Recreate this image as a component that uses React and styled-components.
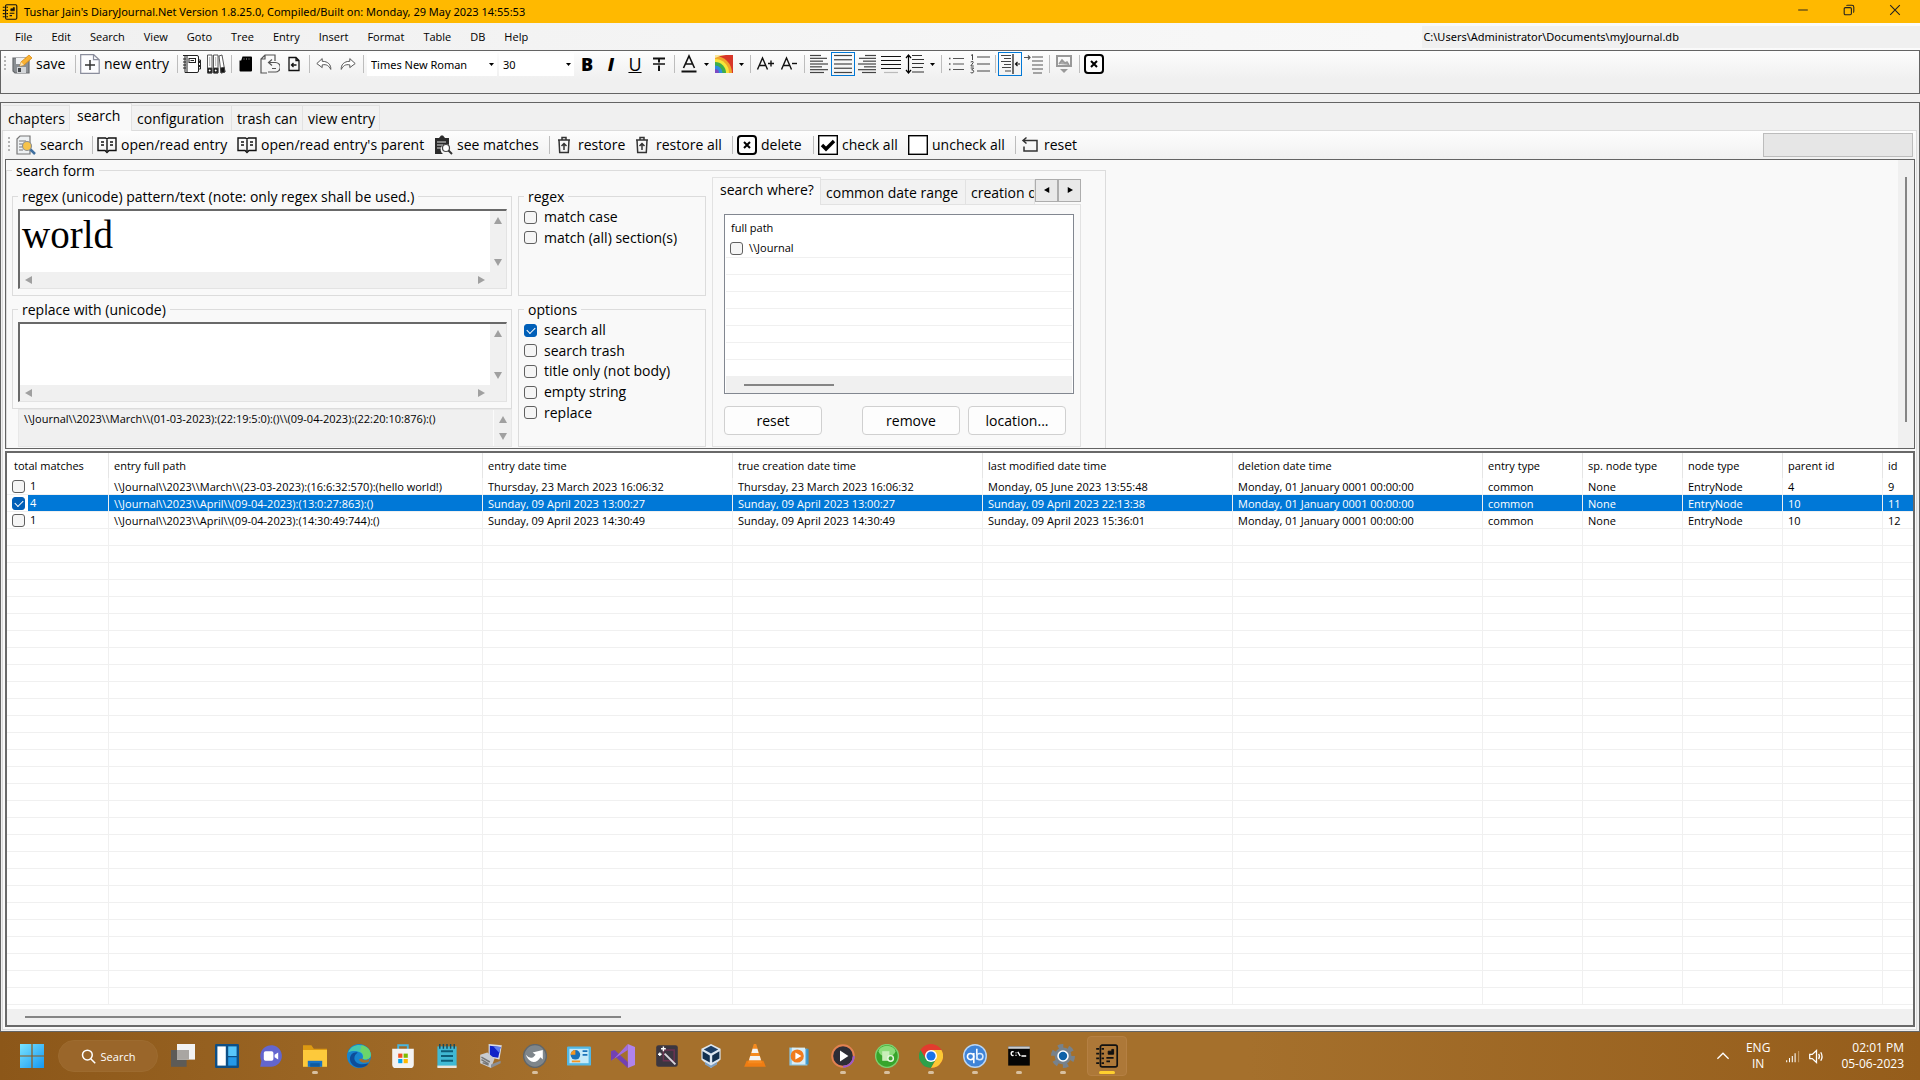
import React from "react";
import styled, { createGlobalStyle, css } from "styled-components";

const GlobalStyle = createGlobalStyle`
  * {
    box-sizing: border-box;
  }
  body {
    margin: 0;
    background: #f0f0f0;
    color: #000;
    font-family: "Open Sans", "Noto Sans", sans-serif;
    font-size: 14px;
  }
  button, input, textarea, select {
    font-family: inherit;
    color: inherit;
  }
`;

const Desktop = styled.div`
  display: flex;
  flex-direction: column;
  min-height: 100vh;
`;

/* ---------- title bar and menu ---------- */

const TitleBar = styled.header`
  display: flex;
  align-items: center;
  height: 23px;
  padding: 0 2px;
  background: #ffb900;
  font-family: "Noto Sans", sans-serif;
  font-size: 11px;
`;

const TitleText = styled.span`
  flex: 1;
  margin-left: 6px;
`;

const WindowButton = styled.button`
  display: flex;
  align-items: center;
  justify-content: center;
  width: 46px;
  height: 20px;
  margin-bottom: 3px;
  padding: 0;
  border: 0;
  background: none;
`;

const MenuBar = styled.nav`
  display: flex;
  align-items: center;
  height: 27px;
  padding-left: 6px;
  background: linear-gradient(90deg, #f0f0f0, #fbfbfb);
`;

const MenuItem = styled.button`
  padding: 0 10px 0 9px;
  border: 0;
  background: none;
  font-size: 11px;
  line-height: 20px;
`;

const DbPath = styled.div`
  width: 26%;
  margin-left: auto;
  padding-left: 1px;
  background: #f0f0f0;
  font-family: "Noto Sans", sans-serif;
  font-size: 11px;
  line-height: 22px;
`;

/* ---------- tool bars ---------- */

const FormatPanel = styled.div`
  height: 44px;
  border: 1px solid #646464;
  background: linear-gradient(#fdfdfd, #f0f0f0 28px);
`;

const ToolRow = styled.div`
  display: flex;
  align-items: center;
  height: 26px;
`;

const SearchTools = styled(ToolRow)`
  height: 28px;
  background: linear-gradient(#fdfdfd, #f1f1f1);
`;

const Grip = styled.span`
  width: 2px;
  height: 16px;
  margin: 0 4px 0 3px;
  background: repeating-linear-gradient(#b4b4b4 0 2px, transparent 2px 4px);
`;

const Separator = styled.span`
  width: 1px;
  height: 18px;
  margin: 0 2px 0 3px;
  background: #bdbdbd;
`;

const ToolButton = styled.button`
  display: flex;
  align-items: center;
  justify-content: ${(p) => (p.$w ? "flex-start" : "center")};
  gap: 4px;
  flex: none;
  width: ${(p) => p.$w || 24}px;
  height: 24px;
  padding: 0 0 0 ${(p) => (p.$w ? 2 : 0)}px;
  border: ${(p) => (p.$on ? "1px solid #0078d7" : "0")};
  background: none;
  font-size: 14px;
  line-height: 20px;
  white-space: nowrap;
`;

const DropArrow = styled.button`
  display: flex;
  align-items: center;
  justify-content: center;
  width: 11px;
  height: 24px;
  padding: 0;
  border: 0;
  background: none;
`;

const ComboWrap = styled.span`
  display: grid;
  align-items: center;

  > * {
    grid-area: 1 / 1;
  }
  svg {
    justify-self: end;
    margin-right: 4px;
    pointer-events: none;
  }
`;

const Combo = styled.select`
  width: ${(p) => p.$w}px;
  height: 23px;
  margin: 0 1px;
  padding: 0 4px;
  border: 0;
  appearance: none;
  background: #fff;
  font-family: "Noto Sans", sans-serif;
  font-size: 11px;
`;

const Progress = styled.progress`
  width: 150px;
  height: 24px;
  margin: 0 2px 0 auto;
  border: 1px solid #bcbcbc;
  appearance: none;

  &::-webkit-progress-bar {
    background: #e6e6e6;
  }
`;

/* ---------- tabs ---------- */

const Main = styled.main`
  display: flex;
  flex: 1;
  flex-direction: column;
  margin-top: 8px;
  border: 1px solid #646464;
  background: #f0f0f0;
`;

const TabStrip = styled.div`
  display: flex;
  align-items: flex-end;
  height: 27px;
  padding-left: 2px;
`;

const Tab = styled.button`
  flex: none;
  width: ${(p) => p.$w}px;
  height: 25px;
  padding: 1px 0 0 5px;
  overflow: hidden;
  border: 1px solid #e2e2e2;
  border-left-width: 0;
  border-bottom: 0;
  background: #f2f2f2;
  font-size: 14px;
  line-height: 22px;
  text-align: left;
  white-space: nowrap;

  ${(p) =>
    p.$active &&
    css`
      z-index: 1;
      height: 28px;
      margin-bottom: -1px;
      padding: 0 0 3px 7px;
      background: #f9f9f9;
    `}
`;

const TabPage = styled.section`
  display: flex;
  flex: 1;
  flex-direction: column;
  margin: 0 2px 1px 1px;
  padding: 0 1px 2px 2px;
  border: 1px solid #dcdcdc;
  background: #f9f9f9;
`;

/* ---------- search form ---------- */

const FormPanel = styled.div`
  display: flex;
  justify-content: space-between;
  height: 290px;
  overflow: hidden;
  border: 1px solid #646464;
`;

const PanelScroll = styled.div`
  display: flex;
  justify-content: center;
  width: 16px;
  padding: 17px 0 26px;
  background: #f0f0f0;

  &::before {
    width: 2px;
    background: #858585;
    content: "";
  }
`;

const SearchForm = styled.fieldset`
  display: flex;
  gap: 6px;
  height: 320px;
  margin: 3px 0 0;
  padding: 0 24px 0 5px;
  border: 1px solid #dcdcdc;
`;

const FormLegend = styled.legend`
  padding: 2px 4px 0;
  line-height: 12px;
`;

const Column = styled.div`
  display: flex;
  flex-direction: column;
  width: ${(p) => p.$w}px;
  padding-top: 9px;
`;

const Group = styled.fieldset`
  height: ${(p) => p.$h || 110}px;
  min-width: 0;
  margin: 0 0 3px;
  padding: ${(p) => (p.$text ? "3px 4px 5px 5px" : "1px 5px")};
  border: 1px solid #dcdcdc;

  &:last-of-type {
    margin-bottom: 0;
  }
`;

const Legend = styled.legend`
  padding: 2px 4px 0;
  line-height: 18px;
`;

const TextBox = styled.div`
  display: grid;
  grid-template-columns: 1fr 16px;
  grid-template-rows: 1fr 16px;
  height: 80px;
  border: 1px solid #e3e3e3;
  border-top: 2px solid #696969;
  border-left: 2px solid #696969;
  background: #f0f0f0;
`;

const Pattern = styled.textarea`
  width: 100%;
  height: 100%;
  padding: 1px 1px 0 2px;
  overflow: hidden;
  border: 0;
  outline: 0;
  resize: none;
  background: #fff;
  font-family: "Liberation Serif", serif;
  font-size: 39px;
  line-height: 46px;
`;

const ArrowBar = styled.div`
  display: flex;
  flex-direction: ${(p) => (p.$vertical ? "column" : "row")};
  align-items: center;
  justify-content: space-between;
  padding: ${(p) => (p.$vertical ? "6px 0" : "0 5px")};
`;

const PathBox = styled.div`
  display: flex;
  justify-content: space-between;
  height: 38px;
  margin-left: 6px;
  padding-left: 5px;
  border: 1px solid #e8e8e8;
  background: #f0f0f0;
  font-size: 11px;
  line-height: 18px;
`;

const PathScroll = styled(ArrowBar)`
  width: 18px;
  border-left: 1px solid #fbfbfb;
`;

const Options = styled.div`
  display: flex;
  flex-direction: column;
  height: ${(p) => p.$h}px;
`;

const CheckLabel = styled.label`
  display: flex;
  flex: 1;
  align-items: center;
  gap: 7px;
  line-height: 20px;
`;

const Check = styled.input.attrs({ type: "checkbox" })`
  flex: none;
  width: 13px;
  height: 13px;
  margin: 0;
  border: 1px solid #606060;
  border-radius: 3px;
  appearance: none;
  background: #f5f5f5;

  &:checked {
    border-color: #005fb8;
    background: #005fb8;
  }
  &:checked::after {
    display: block;
    width: 7px;
    height: 4px;
    margin: 2px;
    border: solid #fff;
    border-width: 0 0 1px 1px;
    transform: rotate(-45deg);
    content: "";
  }
`;

const WhereColumn = styled.div`
  width: 369px;
`;

const WhereTabs = styled(TabStrip)`
  padding: 0;
  border-left: 1px solid #e2e2e2;
`;

const SpinButton = styled.button`
  display: flex;
  flex: 1;
  align-items: center;
  justify-content: center;
  height: 23px;
  margin-bottom: 2px;
  padding: 0 0 2px;
  border: 1px solid #adadad;
  background: #e9e9e9;
`;

const WherePage = styled.div`
  display: flex;
  flex-direction: column;
  gap: 12px;
  height: 243px;
  padding: 9px 6px 0 11px;
  border: 1px solid #e2e2e2;
`;

const PathList = styled.div`
  height: 180px;
  padding: 0 1px 1px;
  border: 1px solid #828790;
  background: #fff;
`;

const PathTable = styled.table`
  width: 100%;
  border-collapse: collapse;
  font-size: 11px;

  th {
    height: 25px;
    padding: 0 5px;
    font-weight: 400;
    text-align: left;
  }
  td {
    height: 17px;
    padding: 0 4px;
    border-bottom: 1px solid #f0f0f0;
    line-height: 16px;
  }
`;

const ScrollBar = styled.div`
  display: flex;
  align-items: center;
  height: 16px;
  padding-left: 18px;
  background: #f0f0f0;
`;

const Thumb = styled.div`
  width: ${(p) => p.$w};
  height: 2px;
  background: #858585;
`;

const Buttons = styled.div`
  display: flex;
  gap: 8px;
  padding-right: 8px;
`;

const PushButton = styled.button`
  width: 98px;
  height: 29px;
  margin-right: ${(p) => (p.$first ? "auto" : "0")};
  padding: 0;
  border: 1px solid #d0d0d0;
  border-radius: 4px;
  background: #fdfdfd;
  font-size: 14px;
`;

/* ---------- results ---------- */

const Results = styled.div`
  display: flex;
  flex: 1;
  flex-direction: column;
  justify-content: space-between;
  margin-top: 2px;
  border: 2px solid #696969;
  background: #fff;
`;

const ResultTable = styled.table`
  width: 100%;
  border-collapse: separate;
  border-spacing: 0;
  table-layout: fixed;
  font-size: 11px;
  line-height: 15px;

  th,
  td {
    padding: 0 5px;
    border-right: 1px solid #f0f0f0;
    overflow: hidden;
    text-align: left;
    white-space: nowrap;
  }
  th {
    height: 25px;
    border-color: #e5e5e5;
    font-weight: 400;
  }
  th:first-child {
    padding-left: 7px;
  }
  td {
    height: 17px;
    padding-top: 1px;
    border-bottom: 1px solid #f0f0f0;
  }
  td:first-child {
    padding: 0;
  }
  th:last-child,
  td:last-child {
    border-right: 0;
  }
`;

const ResultRow = styled.tr`
  ${(p) =>
    p.$selected &&
    css`
      background: #0078d7;
      color: #fff;
    `}
`;

const MatchCell = styled.label`
  display: flex;
  align-items: center;
  height: 16px;
  line-height: 16px;
`;

const CheckSlot = styled.span`
  display: flex;
  align-items: center;
  width: 21px;
  height: 16px;
  margin-right: 2px;
  padding-left: 5px;
  background: #fff;
`;

const PathName = styled.span`
  margin-left: 6px;
`;

/* ---------- task bar ---------- */

const TaskBar = styled.footer`
  display: flex;
  align-items: center;
  height: 48px;
  padding: 0 16px 0 10px;
  background: linear-gradient(90deg, #8c5719, #a5702c 30%, #a5702c 65%, #955d1b);
  color: #fff;
  font-size: 12px;
  line-height: 16px;
`;

const TaskItem = styled.button`
  display: flex;
  flex-direction: column;
  align-items: center;
  justify-content: center;
  width: 40px;
  height: 40px;
  margin: 0 2px;
  padding: 0;
  border: ${(p) => (p.$active ? "1px solid #b58043" : "0")};
  border-radius: 4px;
  background: ${(p) => (p.$active ? "#ad7838" : "none")};

  &::after {
    width: ${(p) => (p.$active ? 16 : 6)}px;
    height: 3px;
    margin: 3px 0 -6px;
    border-radius: 2px;
    background: ${(p) =>
      p.$active ? "#ffd02e" : p.$running ? "#d8c0a0" : "transparent"};
    content: "";
  }
`;

const TaskSearch = styled.button`
  display: flex;
  align-items: center;
  justify-content: center;
  gap: 5px;
  width: 100px;
  height: 32px;
  margin: 0 3px 0 4px;
  padding: 0;
  border: 1px solid #9d6b2f;
  border-radius: 16px;
  background: #9a662a;
  color: #fff;
  font-size: 11px;
`;

const Tray = styled.div`
  display: flex;
  align-items: center;
  gap: 16px;
  margin-left: auto;
`;

const TrayIcons = styled.div`
  display: flex;
  align-items: center;
  gap: 8px;
`;

const TrayText = styled.div`
  text-align: ${(p) => p.$align};
`;

/* ---------- icons ---------- */

const Svg = ({ s = 20, children, ...rest }) => (
  <svg
    width={s}
    height={s}
    viewBox="0 0 20 20"
    fill="none"
    stroke="#222"
    strokeWidth="1.2"
    aria-hidden="true"
    {...rest}
  >
    {children}
  </svg>
);

const Tri = ({ dir = "down", fill = "#a0a0a0", s = 8 }) => {
  const points = {
    up: "4,0 8,7 0,7",
    down: "0,1 8,1 4,8",
    left: "0,4 7,0 7,8",
    right: "8,4 1,0 1,8",
  };
  return (
    <svg width={s} height={s} viewBox="0 0 8 8" aria-hidden="true">
      <polygon points={points[dir]} fill={fill} />
    </svg>
  );
};

const SmallArrow = () => (
  <svg width="5" height="3" viewBox="0 0 5 3" aria-hidden="true">
    <polygon points="0,0 5,0 2.5,3" fill="#000" />
  </svg>
);

const JournalIcon = ({ s = 16 }) => (
  <Svg s={s} stroke="#111" strokeWidth="1.4">
    <rect x="4.5" y="1" width="14" height="18" rx="1.5" />
    <path d="M1 4h2.5M5.5 4h2M1 8h2.5M5.5 8h2M1 12h2.5M5.5 12h2M1 16h2.5M5.5 16h2" />
    <path d="M9.500 11.500h6M9.500 14.500h3" />
    <path d="M11 8.500V6h3V4.500h1.500v4z" fill="#111" strokeWidth="0.8" />
  </Svg>
);

const SaveIcon = () => (
  <Svg>
    <path d="M1 4h16v15H3l-2-2z" fill="#8b8f93" stroke="#66696c" />
    <rect x="4" y="4" width="9" height="6" fill="#eef0f2" stroke="none" />
    <rect x="5" y="13" width="9" height="6" fill="#d3d6d9" stroke="none" />
    <rect x="6" y="14" width="3" height="4" fill="#44474a" stroke="none" />
    <path d="M8 12l1-4 8-7 3 3-8 7z" fill="#f9b233" stroke="#d98a12" strokeWidth="0.8" />
    <path d="M8 12l1-4 3 3z" fill="#fbe3b5" stroke="none" />
  </Svg>
);

const NewIcon = () => (
  <Svg stroke="#8a8d9c">
    <path d="M.7.7h13l5.500 5v13.600H.7z" fill="#fcfcfe" />
    <path d="M13.500.7v5h5.600" />
    <path d="M5 11h10M10 6v10" stroke="#333" strokeWidth="1.500" />
  </Svg>
);

const NotebookIcon = () => (
  <Svg stroke="#222" strokeWidth="1">
    <path d="M3 1.500h12q1.500 0 1.500 1.500v14q0 1.500-1.500 1.500H3z" fill="#fff" />
    <path d="M5 2v16M1 1.500h3M16.500 6h2v9h-2" />
    <path d="M1 5h3M1 8h3M1 11h3M1 14h3" />
    <rect x="7" y="4.500" width="6.500" height="4" />
    <path d="M8.500 6.500h3.500" />
    <path d="M16.500 8h2M16.500 12h2" strokeWidth="2" />
  </Svg>
);

const BindersIcon = () => (
  <Svg stroke="#444" strokeWidth="0.900">
    <path d="M1.500 1H6v18H1.500zM7.500 1H12v18H7.500z" fill="#fff" />
    <path d="M13 2l3-1 3 17-4 1z" fill="#fff" />
    <path d="M1.500 14H6v5H1.500zM7.500 14H12v5H7.500zM14.500 14l3.700-.7.8 4.700-4 1z" fill="#111" />
    <path d="M3.700 3v9M9.700 3v9" stroke="#aaa" />
    <circle cx="3.700" cy="16.500" r="1" fill="#fff" stroke="none" />
    <circle cx="9.700" cy="16.500" r="1" fill="#fff" stroke="none" />
  </Svg>
);

const CardIcon = () => (
  <Svg stroke="none">
    <path d="M6.500 2.500H15q1 0 1 1V16.500q0 1-1 1H4.500q-1 0-1-1V6.500h1.700z" fill="#000" />
    <path d="M8 4v2M10.500 4v2M13 4v2" stroke="#555" strokeWidth="1" />
  </Svg>
);

const RevertPageIcon = () => (
  <Svg stroke="#555">
    <path d="M15 7V1H5L1 5v14h6M5 1v4H1" />
    <path d="M9 8.500h6.500a3.500 3.500 0 010 9.500H8M12 5.500l-3.500 3 3.500 3M12 14.500h4" />
  </Svg>
);

const PageBackIcon = () => (
  <Svg stroke="#111" strokeWidth="1.300">
    <path d="M5 3.500h7l3 3v10H5zM12 3.500v3h3" />
    <path d="M12.500 11h-5M9.500 9l-2 2 2 2" />
  </Svg>
);

const UndoIcon = ({ flip }) => (
  <Svg s={18} stroke="#555" strokeWidth="1.100" transform={flip ? "scale(-1 1)" : undefined}>
    <path d="M8 4L2 9.500 8 14v-3c5-1 7.500 1 9.500 5 .5-5-3-9-9.500-9z" fill="#fff" />
  </Svg>
);

const LetterIcon = styled.span`
  font-size: 18px;
  font-weight: ${(p) => (p.$bold ? 800 : 400)};
  font-style: ${(p) => (p.$italic ? "italic" : "normal")};
  text-decoration: ${(p) => p.$line || "none"};
  line-height: 20px;
`;

const FontColorIcon = () => (
  <Svg stroke="#111" strokeWidth="1.600">
    <path d="M4.500 14L10 2l5.500 12M6.500 10h7" />
    <path d="M2.500 17.500h15" strokeWidth="2" />
  </Svg>
);

const StrikeIcon = () => (
  <Svg stroke="#111" strokeWidth="2">
    <path d="M4 4.500h12M10 4.500v4M10 11.500V17" />
    <path d="M4 10h12" strokeWidth="1.500" />
  </Svg>
);

const RainbowIcon = () => (
  <Svg stroke="none">
    <path d="M1 1h18v18H1z" fill="#d8362a" />
    <path d="M1 2a17 17 0 0117 17H1z" fill="#f2a52b" />
    <path d="M1 5a14 14 0 0114 14H1z" fill="#f6e63a" />
    <path d="M1 8a11 11 0 0111 11H1z" fill="#3fae4a" />
    <path d="M1 11.500a7.500 7.500 0 017.500 7.500H1z" fill="#2f8de0" />
    <path d="M1 15a4 4 0 014 4H1z" fill="#7b4bc4" />
    <path d="M1 1h11a30 30 0 00-11 3z" fill="#f9e79a" />
  </Svg>
);

const ScaleIcon = ({ plus }) => (
  <Svg stroke="#111" strokeWidth="1.400">
    <path d="M2.500 15.500L7.500 4l5 11.500M4.500 11.500h6" />
    <path d={plus ? "M13 9.500h6M16 6.500v6" : "M13 9.500h5"} />
  </Svg>
);

const Lines = ({ rows }) => (
  <Svg stroke="#444">
    {rows.map(([x1, x2], i) => (
      <path key={i} d={`M${x1} ${1.5 + i * (17 / (rows.length - 1))}H${x2}`} />
    ))}
  </Svg>
);

const alignLeft = [[1, 12], [1, 18], [1, 14], [1, 19], [1, 13], [1, 19], [1, 15]];
const alignRight = alignLeft.map(([a, b]) => [20 - b, 20 - a]);
const alignCenter = [[1, 19], [1, 19], [1, 19], [1, 19], [1, 19]];

const JustifyIcon = () => (
  <Svg stroke="#111">
    <path d="M0 2.500h20M0 6.500h20M0 10.500h20M0 14.500h20" />
    <path d="M3 18.500h14" stroke="#bbb" />
  </Svg>
);

const SpacingIcon = () => (
  <Svg stroke="#333">
    <path d="M3.500 1v18M1 4l2.500-3L6 4M1 16l2.500 3L6 16" stroke="#000" />
    <path d="M7 1.500h10M7 5.500h12M7 9.500h12M7 13.500h11M7 18h12" />
  </Svg>
);

const BulletIcon = () => (
  <Svg stroke="#555">
    <path d="M7 4.500h11M7 10h11M7 15.500h11" />
    <path d="M3 4.500h1.500M3 10h1.500M3 15.500h1.500" strokeWidth="1.500" />
  </Svg>
);

const NumberIcon = () => (
  <Svg stroke="#444">
    <path d="M7 3h13M7 10h13M7 17h13" />
    <path d="M1 1.500l1.500-1V6M.7 8q3-1.500 2.500.5L.8 12h3M.7 14h3l-2 2q3 0 1.500 2.500Q2 19.500.6 18.500" strokeWidth="1" />
  </Svg>
);

const OutdentIcon = () => (
  <Svg stroke="#444">
    <path d="M1 1.500h10M4 4.500h7M1 7.500h10M4 10.500h7M2 13.500h9M5 17h6" />
    <path d="M13 0v20" stroke="#111" />
    <path d="M20 10h-4.500M17.500 8l-2 2 2 2" stroke="#111" />
  </Svg>
);

const IndentIcon = () => (
  <Svg stroke="#555">
    <path d="M0 3.500h6M4 1.500l2 2-2 2" />
    <path d="M8 3h11M8 7h11M8 11h11M8 15h11M9 19h9" />
  </Svg>
);

const PictureIcon = () => (
  <Svg stroke="#999" strokeWidth="2">
    <rect x="3" y="2" width="14" height="10" />
    <path d="M5 10l3-4 3 3 2-1 2 3" strokeWidth="1.500" fill="#aaa" />
    <path d="M6 15h8l-4 4z" fill="#999" stroke="none" />
  </Svg>
);

const DeleteIcon = () => (
  <Svg stroke="#000" strokeWidth="2">
    <rect x="1" y="1" width="18" height="18" rx="3" fill="#fdfdfd" />
    <path d="M7 7l6 6M13 7l-6 6" />
  </Svg>
);

const SearchDocIcon = () => (
  <Svg stroke="#777">
    <path d="M1 4l3-3h10v18H1z" fill="#eef1f3" />
    <path d="M3 6h7M3 9h4M3 12h3M3 15h4" />
    <path d="M14 14l5 5" stroke="#3f6f9f" strokeWidth="2.500" />
    <circle cx="11" cy="11" r="4.500" fill="#f6c34a" stroke="#8b8f94" />
  </Svg>
);

const BookIcon = () => (
  <Svg stroke="#111" strokeWidth="1.400">
    <path d="M1 3h7.500l1.500 1 1.500-1H19v12.500h-7L10 17.500 8 15.500H1zM10 4v12" />
    <path d="M4 7h3M4 10h3M13 7h3M13 10h3" />
  </Svg>
);

const ClipSearchIcon = () => (
  <Svg stroke="none">
    <path d="M2 3h4l2-2.500h2L12 3h4v7a5 5 0 00-6 9H2z" fill="#2b2b2b" />
    <path d="M4 7h9M4 10h6M4 13h4" stroke="#ddd" />
    <circle cx="13" cy="13" r="3.500" fill="#fff" stroke="#444" />
    <path d="M15.500 15.500L19 19" stroke="#333" strokeWidth="2" />
  </Svg>
);

const RestoreIcon = () => (
  <Svg stroke="#333" strokeWidth="1.500">
    <path d="M4 5h12M8 4.500V2.500h4v2M5 5l.7 12.500h8.600L15 5" />
    <path d="M10 15V9M7.500 11L10 8.500l2.500 2.500" />
  </Svg>
);

const BoxIcon = ({ checked }) => (
  <Svg stroke="#000" strokeWidth="1.400">
    <rect x=".7" y=".7" width="18.600" height="18.600" fill="#fff" />
    {checked && <path d="M4 10l4 4 8-8" strokeWidth="3.400" />}
  </Svg>
);

const ResetIcon = () => (
  <Svg stroke="#333" strokeWidth="1.500">
    <path d="M3 5.500h14V16H4v-4.500M6.500 2.500l-3.500 3 3.500 3" />
  </Svg>
);

const WindowsIcon = () => (
  <Svg s={24} stroke="none">
    <defs>
      <linearGradient id="win" x1="0" y1="0" x2="20" y2="20" gradientUnits="userSpaceOnUse">
        <stop offset="0" stopColor="#7ae4ff" />
        <stop offset="1" stopColor="#1597f0" />
      </linearGradient>
    </defs>
    <path d="M0 0h9.500v9.500H0zM10.500 0H20v9.500h-9.500zM0 10.500h9.500V20H0zM10.500 10.500H20V20h-9.500z" fill="url(#win)" />
  </Svg>
);

const taskIcons = [
  {
    name: "Task view",
    art: (
      <>
        <path d="M0 5h13v14H0z" fill="#5d5b57" />
        <path d="M5 0h15v13H5z" fill="#f2f2f2" />
        <path d="M5 5h10v8H5z" fill="#a9a6a2" />
      </>
    ),
  },
  {
    name: "Widgets",
    art: (
      <>
        <rect width="20" height="20" rx="1" fill="#0e4f86" />
        <path d="M2 2h7v16H2z" fill="#fff" />
        <path d="M11 2h7v8h-7z" fill="#58c6fa" />
        <path d="M11 11h7v7h-7z" fill="#2499e8" />
      </>
    ),
  },
  {
    name: "Chat",
    art: (
      <>
        <path d="M1 19l1-5A9 9 0 1110 19z" fill="#6366cf" />
        <rect x="4" y="6" width="8" height="8" rx="1.500" fill="#fff" />
        <path d="M13 9l3-2v6l-3-2z" fill="#fff" />
      </>
    ),
  },
  {
    name: "File Explorer",
    running: true,
    art: (
      <>
        <path d="M0 1h7l2 3h11v6H0z" fill="#dd9a12" />
        <path d="M0 5h20v14H0z" fill="#fdc93b" />
        <path d="M4 14h12v5H4z" fill="#1773c4" />
        <path d="M6 16h8v3H6z" fill="#0f5a9e" />
      </>
    ),
  },
  {
    name: "Edge",
    art: (
      <>
        <circle cx="10" cy="10" r="10" fill="#1684cf" />
        <path d="M1 7C4-2 19-1 20 9c0 4-5 5-7 3 2-5-6-8-12-5z" fill="#45c8b0" />
        <path d="M12 1c6 1 9 6 7 10-2 2-5 2-6 1 1-2 1-4-2-6z" fill="#6bd66a" />
        <path d="M7 9c-3 5 2 10 11 7-3 5-12 5-15-1C1 10 5 6 9 7z" fill="#0d4d99" />
        <path d="M12 12q3 3 7 0l-1 3q-6 2-8-2z" fill="#a5702c" />
      </>
    ),
  },
  {
    name: "Store",
    art: (
      <>
        <path d="M6 5V1h8v4" fill="none" stroke="#49b6df" strokeWidth="1.600" />
        <path d="M1 4h18v13q0 3-3 3H4q-3 0-3-3z" fill="#f3f3f3" />
        <path d="M6 8h3.500v3.500H6z" fill="#f25022" />
        <path d="M10.500 8H14v3.500h-3.500z" fill="#7fba00" />
        <path d="M6 12.500h3.500V16H6z" fill="#00a4ef" />
        <path d="M10.500 12.500H14V16h-3.500z" fill="#ffb900" />
      </>
    ),
  },
  {
    name: "Notepad",
    art: (
      <>
        <path d="M2 2h16v17H2z" fill="#40b9d4" />
        <path d="M2 18h16v2H2z" fill="#ece4da" />
        <path d="M5 6h10M5 10h10M5 14h10" stroke="#0d5d78" strokeWidth="1.600" />
        <path d="M4 0v4M7 0v4M10 0v4M13 0v4M16 0v4" stroke="#17495a" />
      </>
    ),
  },
  {
    name: "Remote desktop",
    art: (
      <>
        <path d="M8 0l11 1-2 12-9-2z" fill="#d8dde6" />
        <path d="M9 1.500l9 1-2 9-7-1z" fill="#1024c8" />
        <path d="M12 2l6 .5-1 5z" fill="#5b7cf0" />
        <path d="M1 9l6-2 6 5-3 8-9-4z" fill="#c9ccd0" />
        <path d="M2 11l7 4M2 13l6 3.500M3 15.500l5 2" stroke="#777" />
        <path d="M10 17l8-3v2l-8 4z" fill="#8b8f95" />
      </>
    ),
  },
  {
    name: "Sync",
    running: true,
    art: (
      <>
        <circle cx="10" cy="10" r="9.500" fill="#7f868b" stroke="#60666a" />
        <path d="M2.500 9q2.500 3.500 6 2l2-2L8 7l8.500-2v8l-2-2c-3 6-10 5-12-2z" fill="#fff" />
      </>
    ),
  },
  {
    name: "Control panel",
    art: (
      <>
        <rect y="2" width="20" height="16" rx="1" fill="#52b7e4" />
        <rect x="2" y="4" width="16" height="12" fill="#c5e9f8" />
        <circle cx="7" cy="9" r="4" fill="#1971b8" />
        <path d="M7 9V5a4 4 0 00-4 4z" fill="#f5951f" />
        <path d="M13 6h4M13 9h4" stroke="#1971b8" strokeWidth="1.500" />
        <path d="M4 14.500h7" stroke="#f5951f" strokeWidth="1.500" />
      </>
    ),
  },
  {
    name: "Visual Studio",
    art: (
      <>
        <path d="M14 0l6 2.500v15L14 20z" fill="#b083ec" />
        <path d="M0 14V6l3-1 11 10V20L4 11z" fill="#7341b3" />
        <path d="M0 14l14-9V0L2 13z" fill="#a06ee0" />
      </>
    ),
  },
  {
    name: "Magic tools",
    art: (
      <>
        <rect x="1" y="1" width="18" height="18" rx="2" fill="#3b3640" />
        <path d="M7 5h9v9H7z" fill="none" stroke="#6d3252" />
        <path d="M8 8l9 9" stroke="#d9d5dc" strokeWidth="1.600" />
        <path d="M7 2v4M5 4h4M4 7v3M2.500 8.500h3" stroke="#fff" />
      </>
    ),
  },
  {
    name: "VirtualBox",
    art: (
      <>
        <path d="M10 0l8 4v9l-8 7-8-7V4z" fill="#dce6f0" />
        <path d="M10 1.500L16 4.500 10 8 4 4.500z" fill="#1d3f66" />
        <path d="M3 6l6 3.500v6L3 12zM17 6l-6 3.500v6L17 12z" fill="#12304f" />
        <path d="M5 15l5 3 5-3v2l-5 3-5-3z" fill="#7f9fc0" />
      </>
    ),
  },
  {
    name: "VLC",
    art: (
      <>
        <path d="M3 14h14l2 5H1z" fill="#f07d12" />
        <path d="M9 0h2l5 16H4z" fill="#f58a1f" />
        <path d="M8 4h4l1 3.500H7zM6 10h8l1 3.500H5z" fill="#f3f3f3" />
      </>
    ),
  },
  {
    name: "Media Player classic",
    art: (
      <>
        <path d="M2 3l15 1v14H2z" fill="#8bc7e6" />
        <path d="M4 3h11v14H4z" fill="#d8eef8" />
        <path d="M16 4h2v13h-2z" fill="#3c93c7" />
        <circle cx="8.500" cy="10" r="5.500" fill="#f07c1e" />
        <path d="M7 7l5 3-5 3z" fill="#fff" />
      </>
    ),
  },
  {
    name: "Media Player",
    running: true,
    art: (
      <>
        <circle cx="10" cy="10" r="9" fill="#2d2d36" stroke="#e28152" strokeWidth="1.600" />
        <path d="M19 10a9 9 0 01-9 9" fill="none" stroke="#9b59c9" strokeWidth="1.600" />
        <path d="M7.500 5.500l7 4.500-7 4.500z" fill="#fff" />
      </>
    ),
  },
  {
    name: "Green app",
    running: true,
    art: (
      <>
        <circle cx="10" cy="10" r="9.500" fill="#37a52b" stroke="#7fce6f" />
        <ellipse cx="10" cy="6" rx="7" ry="4.500" fill="#8bdc79" />
        <path d="M6 6h6v8H6z" fill="#c9eeb9" />
        <circle cx="13" cy="12" r="2.300" fill="#3fa634" stroke="#e9f7e2" />
      </>
    ),
  },
  {
    name: "Chrome",
    running: true,
    art: (
      <>
        <circle cx="10" cy="10" r="10" fill="#e33b2e" />
        <path d="M1.300 5A10 10 0 0010 20l4.300-7.500H5.700z" fill="#2da04a" />
        <path d="M10 20A10 10 0 0018.700 5H10l4.300 7.500z" fill="#fcc934" />
        <circle cx="10" cy="10" r="5" fill="#fff" />
        <circle cx="10" cy="10" r="3.800" fill="#1a73e8" />
      </>
    ),
  },
  {
    name: "qBittorrent",
    running: true,
    art: (
      <>
        <circle cx="10" cy="10" r="9.400" fill="#3f84d8" stroke="#b9d4f2" />
        <circle cx="6.300" cy="10.500" r="2.600" fill="none" stroke="#fff" strokeWidth="1.300" />
        <path d="M9 7.500V16M11.500 4v9" stroke="#fff" strokeWidth="1.300" />
        <circle cx="14" cy="10.500" r="2.600" fill="none" stroke="#d8e8fa" strokeWidth="1.300" />
      </>
    ),
  },
  {
    name: "Command Prompt",
    running: true,
    art: (
      <>
        <path d="M1 2h18v16H1z" fill="#050505" />
        <path d="M1 2h18v2H1z" fill="#c8ccd0" />
        <path d="M5.500 6.500q-2-.5-2 1.500t2 1.500M7.500 7v.8M7.500 9v.8M9 6.500l2 3.500M12 10h4" stroke="#fff" fill="none" />
      </>
    ),
  },
  {
    name: "Settings",
    running: true,
    art: (
      <>
        <circle cx="10" cy="10" r="7" fill="#77828c" />
        <circle cx="10" cy="10" r="8" fill="none" stroke="#77828c" strokeWidth="4" strokeDasharray="4.200 4.177" />
        <circle cx="10" cy="10" r="4.800" fill="#fff" />
        <circle cx="10" cy="10" r="3.500" fill="#0f62a8" />
      </>
    ),
  },
];

/* ---------- data ---------- */

const menus = [
  "File", "Edit", "Search", "View", "Goto", "Tree",
  "Entry", "Insert", "Format", "Table", "DB", "Help",
];

const mainTabs = [
  { label: "chapters", w: 67 },
  { label: "search", w: 62, active: true },
  { label: "configuration", w: 100 },
  { label: "trash can", w: 71 },
  { label: "view entry", w: 77 },
];

const searchTools = [
  { label: "search", w: 75, icon: <SearchDocIcon /> },
  null,
  { label: "open/read entry", w: 140, icon: <BookIcon /> },
  { label: "open/read entry's parent", w: 196, icon: <BookIcon /> },
  { label: "see matches", w: 115, icon: <ClipSearchIcon /> },
  null,
  { label: "restore", w: 78, icon: <RestoreIcon /> },
  { label: "restore all", w: 99, icon: <RestoreIcon /> },
  null,
  { label: "delete", w: 75, icon: <DeleteIcon /> },
  null,
  { label: "check all", w: 90, icon: <BoxIcon checked /> },
  { label: "uncheck all", w: 106, icon: <BoxIcon /> },
  null,
  { label: "reset", w: 62, icon: <ResetIcon /> },
];

const columns = [
  { label: "total matches", w: 102 },
  { label: "entry full path", w: 374 },
  { label: "entry date time", w: 250 },
  { label: "true creation date time", w: 250 },
  { label: "last modified date time", w: 250 },
  { label: "deletion date time", w: 250 },
  { label: "entry type", w: 100 },
  { label: "sp. node type", w: 100 },
  { label: "node type", w: 100 },
  { label: "parent id", w: 100 },
  { label: "id" },
];

const rows = [
  {
    matches: 1,
    cells: [
      "\\\\Journal\\\\2023\\\\March\\\\(23-03-2023):(16:6:32:570):(hello world!)",
      "Thursday, 23 March 2023 16:06:32",
      "Thursday, 23 March 2023 16:06:32",
      "Monday, 05 June 2023 13:55:48",
      "Monday, 01 January 0001 00:00:00",
      "common", "None", "EntryNode", "4", "9",
    ],
  },
  {
    matches: 4,
    selected: true,
    cells: [
      "\\\\Journal\\\\2023\\\\April\\\\(09-04-2023):(13:0:27:863):()",
      "Sunday, 09 April 2023 13:00:27",
      "Sunday, 09 April 2023 13:00:27",
      "Sunday, 09 April 2023 22:13:38",
      "Monday, 01 January 0001 00:00:00",
      "common", "None", "EntryNode", "10", "11",
    ],
  },
  {
    matches: 1,
    cells: [
      "\\\\Journal\\\\2023\\\\April\\\\(09-04-2023):(14:30:49:744):()",
      "Sunday, 09 April 2023 14:30:49",
      "Sunday, 09 April 2023 14:30:49",
      "Sunday, 09 April 2023 15:36:01",
      "Monday, 01 January 0001 00:00:00",
      "common", "None", "EntryNode", "10", "12",
    ],
  },
];

const emptyRows = Array.from({ length: 28 });

/* ---------- parts ---------- */

function FormatTools() {
  return (
    <FormatPanel>
      <ToolRow>
        <Grip />
        <ToolButton $w={62}>
          <SaveIcon />
          save
        </ToolButton>
        <Separator />
        <ToolButton $w={96}>
          <NewIcon />
          new entry
        </ToolButton>
        <Separator />
        <ToolButton aria-label="notebook"><NotebookIcon /></ToolButton>
        <ToolButton aria-label="binders"><BindersIcon /></ToolButton>
        <Separator />
        <ToolButton aria-label="card"><CardIcon /></ToolButton>
        <ToolButton aria-label="revert"><RevertPageIcon /></ToolButton>
        <ToolButton aria-label="back"><PageBackIcon /></ToolButton>
        <Separator />
        <ToolButton aria-label="undo"><UndoIcon /></ToolButton>
        <ToolButton aria-label="redo"><UndoIcon flip /></ToolButton>
        <Separator />
        <ComboWrap>
          <Combo $w={130} aria-label="font">
            <option>Times New Roman</option>
          </Combo>
          <SmallArrow />
        </ComboWrap>
        <ComboWrap>
          <Combo $w={75} aria-label="font size">
            <option>30</option>
          </Combo>
          <SmallArrow />
        </ComboWrap>
        <ToolButton><LetterIcon $bold>B</LetterIcon></ToolButton>
        <ToolButton><LetterIcon $bold $italic>I</LetterIcon></ToolButton>
        <ToolButton><LetterIcon $line="underline">U</LetterIcon></ToolButton>
        <ToolButton aria-label="strikeout"><StrikeIcon /></ToolButton>
        <Separator />
        <ToolButton aria-label="font color"><FontColorIcon /></ToolButton>
        <DropArrow aria-label="more font colors"><SmallArrow /></DropArrow>
        <ToolButton aria-label="back color"><RainbowIcon /></ToolButton>
        <DropArrow aria-label="more back colors"><SmallArrow /></DropArrow>
        <Separator />
        <ToolButton aria-label="larger"><ScaleIcon plus /></ToolButton>
        <ToolButton aria-label="smaller"><ScaleIcon /></ToolButton>
        <Separator />
        <ToolButton aria-label="left"><Lines rows={alignLeft} /></ToolButton>
        <ToolButton aria-label="center" $on><Lines rows={alignCenter} /></ToolButton>
        <ToolButton aria-label="right"><Lines rows={alignRight} /></ToolButton>
        <ToolButton aria-label="justify"><JustifyIcon /></ToolButton>
        <ToolButton aria-label="line spacing"><SpacingIcon /></ToolButton>
        <DropArrow aria-label="more line spacing"><SmallArrow /></DropArrow>
        <Separator />
        <ToolButton aria-label="bullets"><BulletIcon /></ToolButton>
        <ToolButton aria-label="numbering"><NumberIcon /></ToolButton>
        <Separator />
        <ToolButton aria-label="outdent" $on><OutdentIcon /></ToolButton>
        <ToolButton aria-label="indent"><IndentIcon /></ToolButton>
        <Separator />
        <ToolButton aria-label="picture"><PictureIcon /></ToolButton>
        <Separator />
        <ToolButton aria-label="close"><DeleteIcon /></ToolButton>
      </ToolRow>
    </FormatPanel>
  );
}

function TextGroup({ label, value }) {
  return (
    <Group $text>
      <Legend>{label}</Legend>
      <TextBox>
        <Pattern aria-label={label} defaultValue={value} spellCheck={false} />
        <ArrowBar $vertical>
          <Tri dir="up" />
          <Tri dir="down" />
        </ArrowBar>
        <ArrowBar>
          <Tri dir="left" />
          <Tri dir="right" />
        </ArrowBar>
      </TextBox>
    </Group>
  );
}

function Option({ children, checked }) {
  return (
    <CheckLabel>
      <Check defaultChecked={checked} />
      {children}
    </CheckLabel>
  );
}

function SearchWhere() {
  return (
    <WhereColumn>
      <WhereTabs>
        <Tab $w={108} $active>search where?</Tab>
        <Tab $w={145}>common date range</Tab>
        <Tab $w={69}>creation date</Tab>
        <SpinButton aria-label="previous tabs"><Tri dir="left" fill="#000" s={6} /></SpinButton>
        <SpinButton aria-label="next tabs"><Tri dir="right" fill="#000" s={6} /></SpinButton>
      </WhereTabs>
      <WherePage>
        <PathList>
          <PathTable>
            <thead>
              <tr>
                <th>full path</th>
              </tr>
            </thead>
            <tbody>
              <tr>
                <td>
                  <MatchCell>
                    <Check />
                    <PathName>\\Journal</PathName>
                  </MatchCell>
                </td>
              </tr>
              {emptyRows.slice(0, 7).map((_, i) => (
                <tr key={i}>
                  <td />
                </tr>
              ))}
            </tbody>
          </PathTable>
          <ScrollBar>
            <Thumb $w="90px" />
          </ScrollBar>
        </PathList>
        <Buttons>
          <PushButton $first>reset</PushButton>
          <PushButton>remove</PushButton>
          <PushButton>location...</PushButton>
        </Buttons>
      </WherePage>
    </WhereColumn>
  );
}

function ResultList() {
  return (
    <Results>
      <ResultTable>
        <colgroup>
          {columns.map((c) => (
            <col key={c.label} width={c.w} />
          ))}
        </colgroup>
        <thead>
          <tr>
            {columns.map((c) => (
              <th key={c.label}>{c.label}</th>
            ))}
          </tr>
        </thead>
        <tbody>
          {rows.map((row, i) => (
            <ResultRow key={i} $selected={row.selected}>
              <td>
                <MatchCell>
                  <CheckSlot>
                    <Check defaultChecked={row.selected} />
                  </CheckSlot>
                  {row.matches}
                </MatchCell>
              </td>
              {row.cells.map((cell, j) => (
                <td key={j}>{cell}</td>
              ))}
            </ResultRow>
          ))}
          {emptyRows.map((_, i) => (
            <tr key={i}>
              {columns.map((c) => (
                <td key={c.label} />
              ))}
            </tr>
          ))}
        </tbody>
      </ResultTable>
      <ScrollBar>
        <Thumb $w="596px" />
      </ScrollBar>
    </Results>
  );
}

function Taskbar() {
  return (
    <TaskBar>
      <TaskItem aria-label="Start"><WindowsIcon /></TaskItem>
      <TaskSearch>
        <Svg s={15} stroke="#fff" strokeWidth="2">
          <circle cx="8.500" cy="8" r="6.500" />
          <path d="M13 13l6 6" />
        </Svg>
        Search
      </TaskSearch>
      {taskIcons.map((t) => (
        <TaskItem key={t.name} aria-label={t.name} $running={t.running}>
          <Svg s={24} stroke="none">{t.art}</Svg>
        </TaskItem>
      ))}
      <TaskItem $active aria-label="DiaryJournal"><JournalIcon s={24} /></TaskItem>
      <Tray>
        <Svg s={14} stroke="#fff" strokeWidth="1.800">
          <path d="M2 14l8-8 8 8" />
        </Svg>
        <TrayText $align="center">
          ENG
          <br />
          IN
        </TrayText>
        <TrayIcons>
          <Svg s={14} stroke="#fff" strokeWidth="1.500">
            <path d="M1 19v-3M5 19v-6M9 19v-9M13 19V6" />
            <path d="M18 19V3" stroke="#c49a64" />
          </Svg>
          <Svg s={17} stroke="#fff" strokeWidth="1.500">
            <path d="M2 7.500h3L10 3v14l-5-4.500H2z" />
            <path d="M12.500 7q2 3 0 6M15 5q3 5 0 10" />
          </Svg>
        </TrayIcons>
        <TrayText $align="right">
          02:01 PM
          <br />
          05-06-2023
        </TrayText>
      </Tray>
    </TaskBar>
  );
}

export default function App() {
  return (
    <Desktop>
      <GlobalStyle />
      <TitleBar>
        <JournalIcon />
        <TitleText>
          Tushar Jain's DiaryJournal.Net Version 1.8.25.0, Compiled/Built on:
          Monday, 29 May 2023 14:55:53
        </TitleText>
        <WindowButton aria-label="Minimize">
          <Svg s={12}><path d="M2 10h16" strokeWidth="1.600" /></Svg>
        </WindowButton>
        <WindowButton aria-label="Restore">
          <Svg s={12} strokeWidth="1.800">
            <rect x="2" y="6" width="12" height="12" rx="2" />
            <path d="M6 3q0-1 2-1h7q3 0 3 3v7q0 2-1 2" />
          </Svg>
        </WindowButton>
        <WindowButton aria-label="Close">
          <Svg s={12} strokeWidth="1.800"><path d="M2 2l16 16M18 2L2 18" /></Svg>
        </WindowButton>
      </TitleBar>
      <MenuBar>
        {menus.map((m) => (
          <MenuItem key={m}>{m}</MenuItem>
        ))}
        <DbPath>C:\Users\Administrator\Documents\myJournal.db</DbPath>
      </MenuBar>
      <FormatTools />
      <Main>
        <TabStrip>
          {mainTabs.map((t) => (
            <Tab key={t.label} $w={t.w} $active={t.active}>
              {t.label}
            </Tab>
          ))}
        </TabStrip>
        <TabPage>
          <SearchTools>
            <Grip />
            {searchTools.map((t, i) =>
              t ? (
                <ToolButton key={i} $w={t.w}>
                  {t.icon}
                  {t.label}
                </ToolButton>
              ) : (
                <Separator key={i} />
              )
            )}
            <Progress value={0} max={100} aria-label="progress" />
          </SearchTools>
          <FormPanel>
            <SearchForm>
              <FormLegend>search form</FormLegend>
              <Column $w={500}>
                <TextGroup
                  label="regex (unicode) pattern/text (note: only regex shall be used.)"
                  value="world"
                />
                <TextGroup label="replace with (unicode)" value="" />
                <PathBox>
                  <span>
                    \\Journal\\2023\\March\\(01-03-2023):(22:19:5:0):()\\(09-04-2023):(22:20:10:876):()
                  </span>
                  <PathScroll $vertical>
                    <Tri dir="up" />
                    <Tri dir="down" />
                  </PathScroll>
                </PathBox>
              </Column>
              <Column $w={188}>
                <Group>
                  <Legend>regex</Legend>
                  <Options $h={41}>
                    <Option>match case</Option>
                    <Option>match (all) section(s)</Option>
                  </Options>
                </Group>
                <Group $h={148}>
                  <Legend>options</Legend>
                  <Options $h={103}>
                    <Option checked>search all</Option>
                    <Option>search trash</Option>
                    <Option>title only (not body)</Option>
                    <Option>empty string</Option>
                    <Option>replace</Option>
                  </Options>
                </Group>
              </Column>
              <SearchWhere />
            </SearchForm>
            <PanelScroll />
          </FormPanel>
          <ResultList />
        </TabPage>
      </Main>
      <Taskbar />
    </Desktop>
  );
}
